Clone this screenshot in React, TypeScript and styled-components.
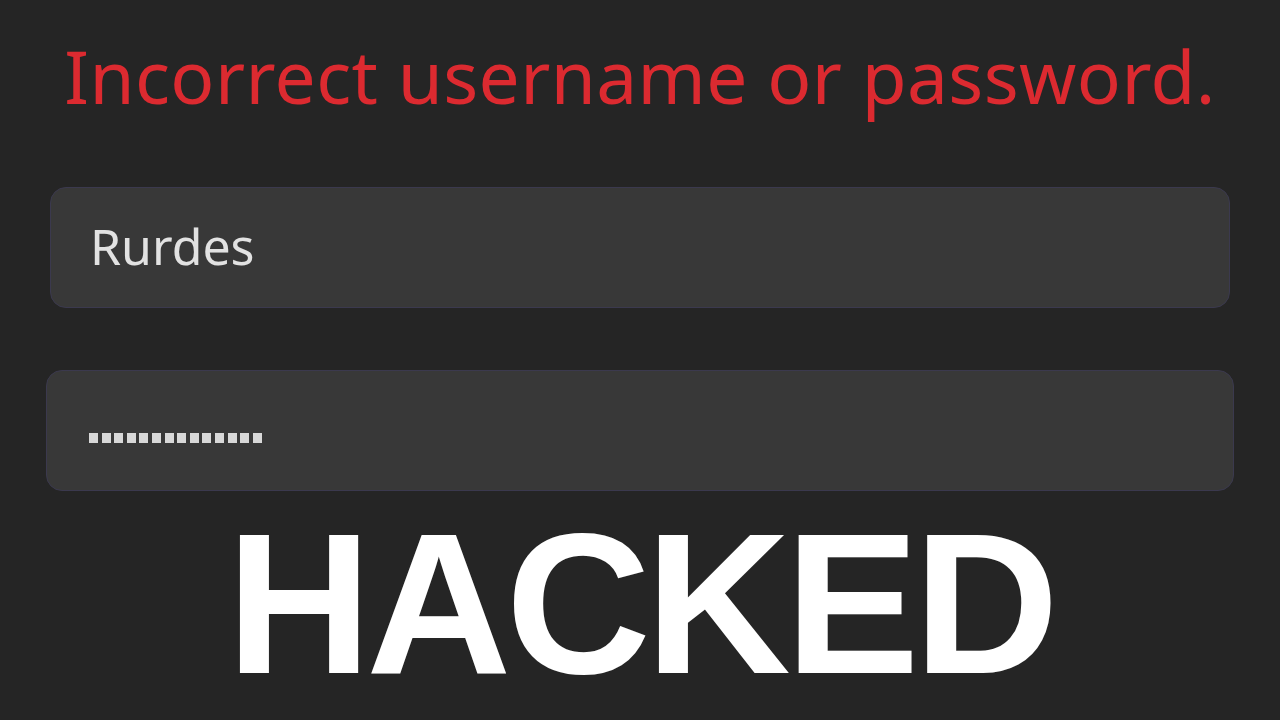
import styled, { createGlobalStyle } from 'styled-components';

const GlobalStyle = createGlobalStyle`
  html, body {
    margin: 0;
    padding: 0;
    background: #252525;
  }
  body {
    width: 1280px;
    height: 720px;
    overflow: hidden;
  }
`;

const Page = styled.div`
  width: 1280px;
  height: 720px;
  display: flex;
  flex-direction: column;
  align-items: center;
  background: #252525;
  font-family: 'Noto Sans', 'Open Sans', sans-serif;
`;

const ErrorText = styled.h1`
  margin: 26px 0 0 0;
  font-weight: 400;
  font-size: 73px;
  line-height: 100px;
  letter-spacing: 0.4px;
  color: #dc2a30;
  text-align: center;
`;

const Form = styled.div`
  width: 100%;
  display: flex;
  flex-direction: column;
  margin-top: 61px;
  gap: 62px;
`;

const Field = styled.div<{ $inset: number }>`
  height: 121px;
  margin: 0 ${(p) => p.$inset}px;
  box-sizing: border-box;
  display: flex;
  align-items: center;
  padding-left: ${(p) => 88 - p.$inset}px;
  background: #383838;
  border: 1.5px solid #3b394e;
  border-radius: 16px;
`;

const UserName = styled.span`
  font-size: 50px;
  color: #e2e2e2;
  margin-top: -4px;
  margin-left: 1px;
`;

const Dots = styled.div`
  display: flex;
  gap: 3.6px;
  margin-top: 14px;
`;

const Dot = styled.span`
  width: 9px;
  height: 10px;
  background: #d8d8d8;
`;

const Hacked = styled.div`
  margin-top: 18px;
  font-family: 'Liberation Sans', Arial, sans-serif;
  font-weight: 700;
  font-size: 201px;
  line-height: 190px;
  letter-spacing: -5.5px;
  color: #ffffff;
`;

export default function App() {
  return (
    <Page>
      <GlobalStyle />
      <ErrorText>Incorrect username or password.</ErrorText>
      <Form>
        <Field $inset={50}>
          <UserName>Rurdes</UserName>
        </Field>
        <Field $inset={46}>
          <Dots>
            {Array.from({ length: 14 }).map((_, i) => (
              <Dot key={i} />
            ))}
          </Dots>
        </Field>
      </Form>
      <Hacked>HACKED</Hacked>
    </Page>
  );
}
